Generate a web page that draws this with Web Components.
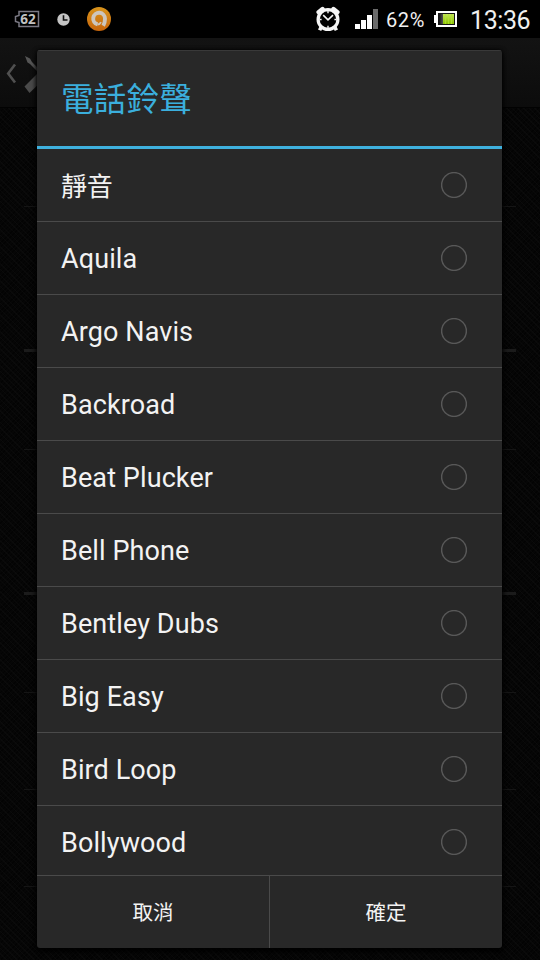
<!DOCTYPE html>
<html lang="zh-Hant">
<head>
<meta charset="utf-8">
<title>電話鈴聲</title>
<style>
html,body{margin:0;height:100%;background:#060606;overflow:hidden}
body{font-family:Roboto,"Noto Sans CJK TC",sans-serif;color:#f3f3f3}
</style>
</head>
<body>
<phone-screen>
  <status-bar slot="status"></status-bar>
  <settings-backdrop slot="page"></settings-backdrop>
  <choice-dialog slot="dialog">
    <span slot="title">電話鈴聲</span>
    <ring-option cjk>靜音</ring-option>
    <ring-option>Aquila</ring-option>
    <ring-option>Argo Navis</ring-option>
    <ring-option>Backroad</ring-option>
    <ring-option>Beat Plucker</ring-option>
    <ring-option>Bell Phone</ring-option>
    <ring-option>Bentley Dubs</ring-option>
    <ring-option>Big Easy</ring-option>
    <ring-option>Bird Loop</ring-option>
    <ring-option>Bollywood</ring-option>
    <dialog-button slot="actions">取消</dialog-button>
    <dialog-button slot="actions">確定</dialog-button>
  </choice-dialog>
</phone-screen>
<script>
const define = (name, html) => {
  const t = document.createElement('template');
  t.innerHTML = html;
  customElements.define(name, class extends HTMLElement {
    constructor() {
      super();
      this.attachShadow({mode: 'open'}).append(t.content.cloneNode(true));
    }
  });
};

define('phone-screen', `
<style>
:host{display:flex;flex-direction:column;position:relative;width:540px;height:960px;overflow:hidden;background:#060606}
::slotted([slot=page]){flex:1}
::slotted([slot=dialog]){position:absolute;left:37px;top:50px}
</style>
<slot name="status"></slot><slot name="page"></slot><slot name="dialog"></slot>`);

define('status-bar', `
<style>
:host{display:flex;align-items:center;height:38px;background:#000;box-sizing:border-box;padding:0 9px 0 14px;color:#f0f0f0}
svg{display:block;flex:none}
.gap{flex:1}
.pct{font-size:20px;line-height:38px;width:39px;margin:2px 9px 0 8px;white-space:nowrap;letter-spacing:.6px}
.time{font-size:25px;font-weight:400;line-height:38px;margin-top:3px;width:61px;white-space:nowrap;letter-spacing:-.4px}
text{font-family:"Noto Sans",sans-serif}
</style>
<svg width="26" height="18" viewBox="0 0 26 18"><path d="M5 1.5H24.5V16.5H5V12.5L1.5 11.5V6.5L5 5.5Z" fill="none" stroke="#7b7984" stroke-width="1.5"/><text x="6.3" y="14" font-size="13.5" font-weight="700" fill="#c2c2c2" textLength="15.4">62</text></svg>
<svg width="13" height="13" viewBox="0 0 13 13" style="margin-left:17px"><circle cx="6.5" cy="6.5" r="6.2" fill="#c4c4c4"/><path d="M6.5 2.3V7H10.5" fill="none" stroke="#111" stroke-width="1.6"/></svg>
<svg width="24" height="24" viewBox="0 0 24 24" style="margin-left:17px"><defs><linearGradient id="o" x2="0" y2="1"><stop stop-color="#d8941c"/><stop offset="1" stop-color="#c7650c"/></linearGradient></defs><circle cx="12" cy="12" r="12" fill="url(#o)"/><path d="M10.6 17.4A5.9 5.9 0 1 1 18 11.7Q18 16 16.2 18.8" fill="none" stroke="#cdc6bd" stroke-width="3.9"/><path d="M10.5 17.6Q13 17.4 14 15.2" fill="none" stroke="#cdc6bd" stroke-width="1.8"/></svg>
<span class="gap"></span>
<svg width="24" height="26" viewBox="0 0 24 26"><path d="M2.6 6.2L6.6 3M21.4 6.2L17.4 3" stroke="#f5f5f5" stroke-width="4.4" stroke-linecap="round"/><path d="M5 21.5L3.6 24.3M19 21.5L20.4 24.3" stroke="#f5f5f5" stroke-width="3.6"/><circle cx="12" cy="13.5" r="9.9" fill="#000" stroke="#f5f5f5" stroke-width="3.2"/><path d="M7.2 9.2L12 13.8L17 9.2" fill="none" stroke="#f5f5f5" stroke-width="1.6"/><path d="M12 4.8V7.2M12 19.8V22.2M3.4 13.5H5.6M18.4 13.5H20.6" stroke="#f5f5f5" stroke-width="1.4"/></svg>
<svg width="23" height="20" viewBox="0 0 23 20" style="margin-left:15px"><path fill="#fff" d="M0 15h5v5H0zM6 11h5v9H6zM12 6h5v14h-5z"/><path fill="#6b6b6b" d="M18 0h5v20h-5z"/></svg>
<span class="pct">62%</span>
<svg width="23" height="16" viewBox="0 0 23 16"><defs><linearGradient id="g" x2="0" y2="1"><stop stop-color="#c3e65a"/><stop offset="1" stop-color="#8cc400"/></linearGradient><linearGradient id="d"><stop stop-color="#111"/><stop offset="1" stop-color="#555"/></linearGradient></defs><path d="M2 0H23V16H2V12H0V4H2Z" fill="#fff"/><path d="M4 2H21V14H4Z" fill="#151515"/><path d="M5 3H9V13H5Z" fill="url(#d)"/><path d="M9 3H20V13H9Z" fill="url(#g)"/><path d="M11.5 3V13M14.5 3V13M17.5 3V13" stroke="#b5e238" stroke-width=".7"/></svg>
<span class="time" style="margin-left:13px">13:36</span>`);

define('settings-backdrop', `
<style>
:host{display:flex;flex-direction:column;background-color:#060606;background-image:repeating-linear-gradient(45deg,#12121260 0 1px,transparent 1px 4px),repeating-linear-gradient(-45deg,#00000090 0 1px,transparent 1px 3px)}
header{height:70px;flex:none;box-sizing:border-box;background:linear-gradient(#131313,#0c0c0c);border-bottom:1px solid #020202;padding:15px 0 0 5px;display:flex}
.row{margin:0 24px;box-sizing:border-box;flex:none;border-bottom:1px solid #151515}
.thick{border-bottom:3px solid #1b1b1b}
</style>
<header><svg width="55" height="45" viewBox="5 53 55 45"><path d="M15 64.5L8.2 73.5L15 82.5" fill="none" stroke="#505050" stroke-width="2.6"/><path d="M25 56L30 58.5L32 62L45 75L43 77L30 64L27.5 62.5Z" fill="#555"/><path d="M24.5 86.5L40 71L48 75L29.5 93Z" fill="#4a4a4a"/></svg></header>
<div class="row" style="height:99px"></div>
<div class="row thick" style="height:145px"></div>
<div class="row" style="height:98px"></div>
<div class="row thick" style="height:145px"></div>
<div class="row" style="height:98px"></div>
<div class="row" style="height:97px"></div>
<div class="row" style="height:97px"></div>`);

define('choice-dialog', `
<style>
:host{display:flex;flex-direction:column;width:465px;height:898px;background:#282828;border-radius:3px;overflow:hidden;box-shadow:0 0 4px 0 #000,0 3px 6px #000;}
h1{margin:0;box-sizing:border-box;height:99px;flex:none;border-top:1px solid #393939;border-bottom:3px solid #3fb1de;padding:0 24px;font-weight:400;font-size:32.5px;letter-spacing:.3px;line-height:99px;color:#3bafdd;white-space:nowrap}
.list{height:726px;flex:none;overflow:hidden;display:flex;flex-direction:column}
footer{flex:1;display:grid;grid-template-columns:233px 1fr;border-top:1px solid #4a4a4a}
</style>
<h1><slot name="title"></slot></h1>
<div class="list"><slot></slot></div>
<footer><slot name="actions"></slot></footer>`);

define('ring-option', `
<style>
:host{display:flex;flex:none;align-items:center;justify-content:space-between;height:73px;box-sizing:border-box;border-bottom:1px solid #4a4a4a;padding:0 35px 0 24px;font-size:27px;letter-spacing:.1px;white-space:nowrap}
:host([cjk]){font-size:26px;letter-spacing:-.2px}
.label{line-height:72px;padding-top:1px}
:host([cjk]) .label{padding-top:3px;margin-bottom:-1px}
svg{display:block}
</style>
<span class="label"><slot></slot></span><svg width="26" height="26" viewBox="0 0 26 26"><circle cx="13" cy="13" r="12.4" fill="none" stroke="#585858" stroke-width="1.5"/></svg>`);

define('dialog-button', `
<style>
:host{display:flex;align-items:center;justify-content:center;font-size:20.5px;line-height:72px;box-sizing:border-box;height:72px;border-right:1px solid #4a4a4a;white-space:nowrap}
:host(:last-of-type){border-right:0}
span{padding-top:2px}
</style>
<span><slot></slot></span>`);
</script>
</body>
</html>
